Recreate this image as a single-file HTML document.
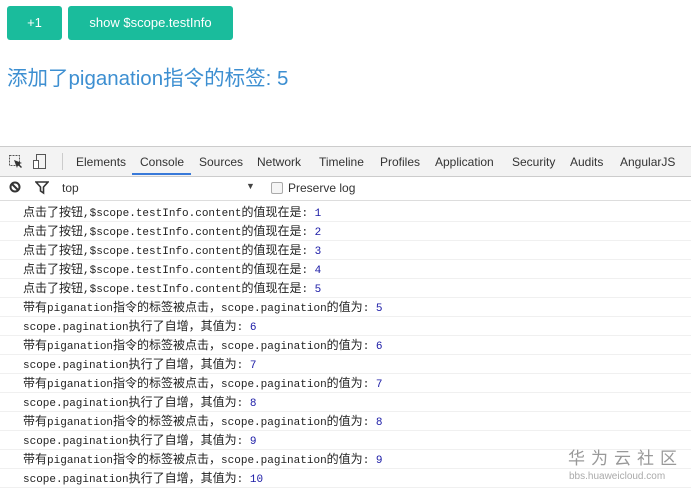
<!DOCTYPE html>
<html><head><meta charset="utf-8"><style>
body{margin:0;width:691px;height:489px;overflow:hidden;background:#fff;font-family:"Liberation Sans","Noto Sans CJK SC",sans-serif;position:relative}
.btn{position:absolute;top:6px;height:34px;background:#1abc9c;border-radius:3px;color:#fff;font-size:13px;line-height:34px;text-align:center}
h1{position:absolute;left:7px;top:61px;margin:0;font-size:20.5px;font-weight:normal;color:#3d8fd1;white-space:nowrap}
.tabs{position:absolute;top:146px;left:0;width:691px;height:29px;background:#f3f3f3;border-top:1px solid #ccc;border-bottom:1px solid #ccc;font-size:12px;color:#333}
.tabs span{position:absolute;top:8px}
.bar{position:absolute;top:176px;left:0;width:691px;height:24px;border-bottom:1px solid #ddd;font-size:12px;color:#333}
.log{position:absolute;left:0;width:691px;height:18px;border-bottom:1px solid #f0f0f0;font-family:"Liberation Mono","Noto Sans CJK SC",monospace;font-size:11px;line-height:19px;color:#222;white-space:nowrap}
.log div{position:absolute;left:23px;top:2px;height:19px}
.c{font-size:12px;font-family:"Noto Sans CJK SC",sans-serif;font-weight:normal;line-height:12px}
.n{color:#1a1aa6}
</style></head><body>
<div class="btn" style="left:7px;width:55px">+1</div>
<div class="btn" style="left:68px;width:165px">show $scope.testInfo</div>
<h1>添加了piganation指令的标签: 5</h1>
<div class="tabs">
<svg style="position:absolute;left:8px;top:7px" width="16" height="16"><rect x="1.5" y="1.5" width="10" height="10" fill="none" stroke="#555" stroke-dasharray="2 1"/><path d="M6 6l8 3-3 1 3 3-1 1-3-3-1 3z" fill="#333"/></svg>
<svg style="position:absolute;left:32px;top:6px" width="16" height="18"><rect x="4.5" y="1.5" width="9" height="14" fill="none" stroke="#555"/><rect x="1.5" y="7.5" width="5" height="8" fill="#fff" stroke="#555"/></svg>
<div style="position:absolute;left:62px;top:6px;width:1px;height:17px;background:#ccc"></div>
<span style="left:76px">Elements</span><span style="left:140px">Console</span><span style="left:199px">Sources</span><span style="left:257px">Network</span><span style="left:319px">Timeline</span><span style="left:380px">Profiles</span><span style="left:435px">Application</span><span style="left:512px">Security</span><span style="left:570px">Audits</span><span style="left:620px">AngularJS</span>
<div style="position:absolute;left:132px;top:26px;width:59px;height:2px;background:#3879d9"></div>
</div>
<div class="bar">
<svg style="position:absolute;left:9px;top:5px" width="14" height="14"><circle cx="6" cy="6" r="4.5" fill="none" stroke="#333" stroke-width="2"/><path d="M3 3l6 6" stroke="#333" stroke-width="2"/></svg>
<svg style="position:absolute;left:35px;top:5px" width="14" height="14"><path d="M1 1h12l-4.5 5v6l-3-2v-4z" fill="none" stroke="#333" stroke-width="1.6"/></svg>
<span style="position:absolute;left:62px;top:5px;color:#333">top</span>
<span style="position:absolute;left:246px;top:5px;font-size:9px;color:#444">▼</span>
<div style="position:absolute;left:271px;top:6px;width:10px;height:10px;border:1px solid #aaa;border-radius:2px;background:#f5f5f5"></div>
<span style="position:absolute;left:288px;top:5px">Preserve log</span>
</div>
<div class="log" style="top:203px"><div><b class="c">点击了按钮</b>,$scope.testInfo.content<b class="c">的值现在是</b>: <span class="n">1</span></div></div>
<div class="log" style="top:222px"><div><b class="c">点击了按钮</b>,$scope.testInfo.content<b class="c">的值现在是</b>: <span class="n">2</span></div></div>
<div class="log" style="top:241px"><div><b class="c">点击了按钮</b>,$scope.testInfo.content<b class="c">的值现在是</b>: <span class="n">3</span></div></div>
<div class="log" style="top:260px"><div><b class="c">点击了按钮</b>,$scope.testInfo.content<b class="c">的值现在是</b>: <span class="n">4</span></div></div>
<div class="log" style="top:279px"><div><b class="c">点击了按钮</b>,$scope.testInfo.content<b class="c">的值现在是</b>: <span class="n">5</span></div></div>
<div class="log" style="top:298px"><div><b class="c">带有</b>piganation<b class="c">指令的标签被点击，</b>scope.pagination<b class="c">的值为</b>: <span class="n">5</span></div></div>
<div class="log" style="top:317px"><div>scope.pagination<b class="c">执行了自增，其值为</b>: <span class="n">6</span></div></div>
<div class="log" style="top:336px"><div><b class="c">带有</b>piganation<b class="c">指令的标签被点击，</b>scope.pagination<b class="c">的值为</b>: <span class="n">6</span></div></div>
<div class="log" style="top:355px"><div>scope.pagination<b class="c">执行了自增，其值为</b>: <span class="n">7</span></div></div>
<div class="log" style="top:374px"><div><b class="c">带有</b>piganation<b class="c">指令的标签被点击，</b>scope.pagination<b class="c">的值为</b>: <span class="n">7</span></div></div>
<div class="log" style="top:393px"><div>scope.pagination<b class="c">执行了自增，其值为</b>: <span class="n">8</span></div></div>
<div class="log" style="top:412px"><div><b class="c">带有</b>piganation<b class="c">指令的标签被点击，</b>scope.pagination<b class="c">的值为</b>: <span class="n">8</span></div></div>
<div class="log" style="top:431px"><div>scope.pagination<b class="c">执行了自增，其值为</b>: <span class="n">9</span></div></div>
<div class="log" style="top:450px"><div><b class="c">带有</b>piganation<b class="c">指令的标签被点击，</b>scope.pagination<b class="c">的值为</b>: <span class="n">9</span></div></div>
<div class="log" style="top:469px"><div>scope.pagination<b class="c">执行了自增，其值为</b>: <span class="n">10</span></div></div>
<div style="position:absolute;left:568px;top:444px;font-size:17px;letter-spacing:6px;color:#999;font-family:'Noto Sans CJK SC',sans-serif;line-height:26px">华为云社区</div>
<div style="position:absolute;left:569px;top:471px;font-size:10px;color:#aaa;line-height:12px">bbs.huaweicloud.com</div>
</body></html>
